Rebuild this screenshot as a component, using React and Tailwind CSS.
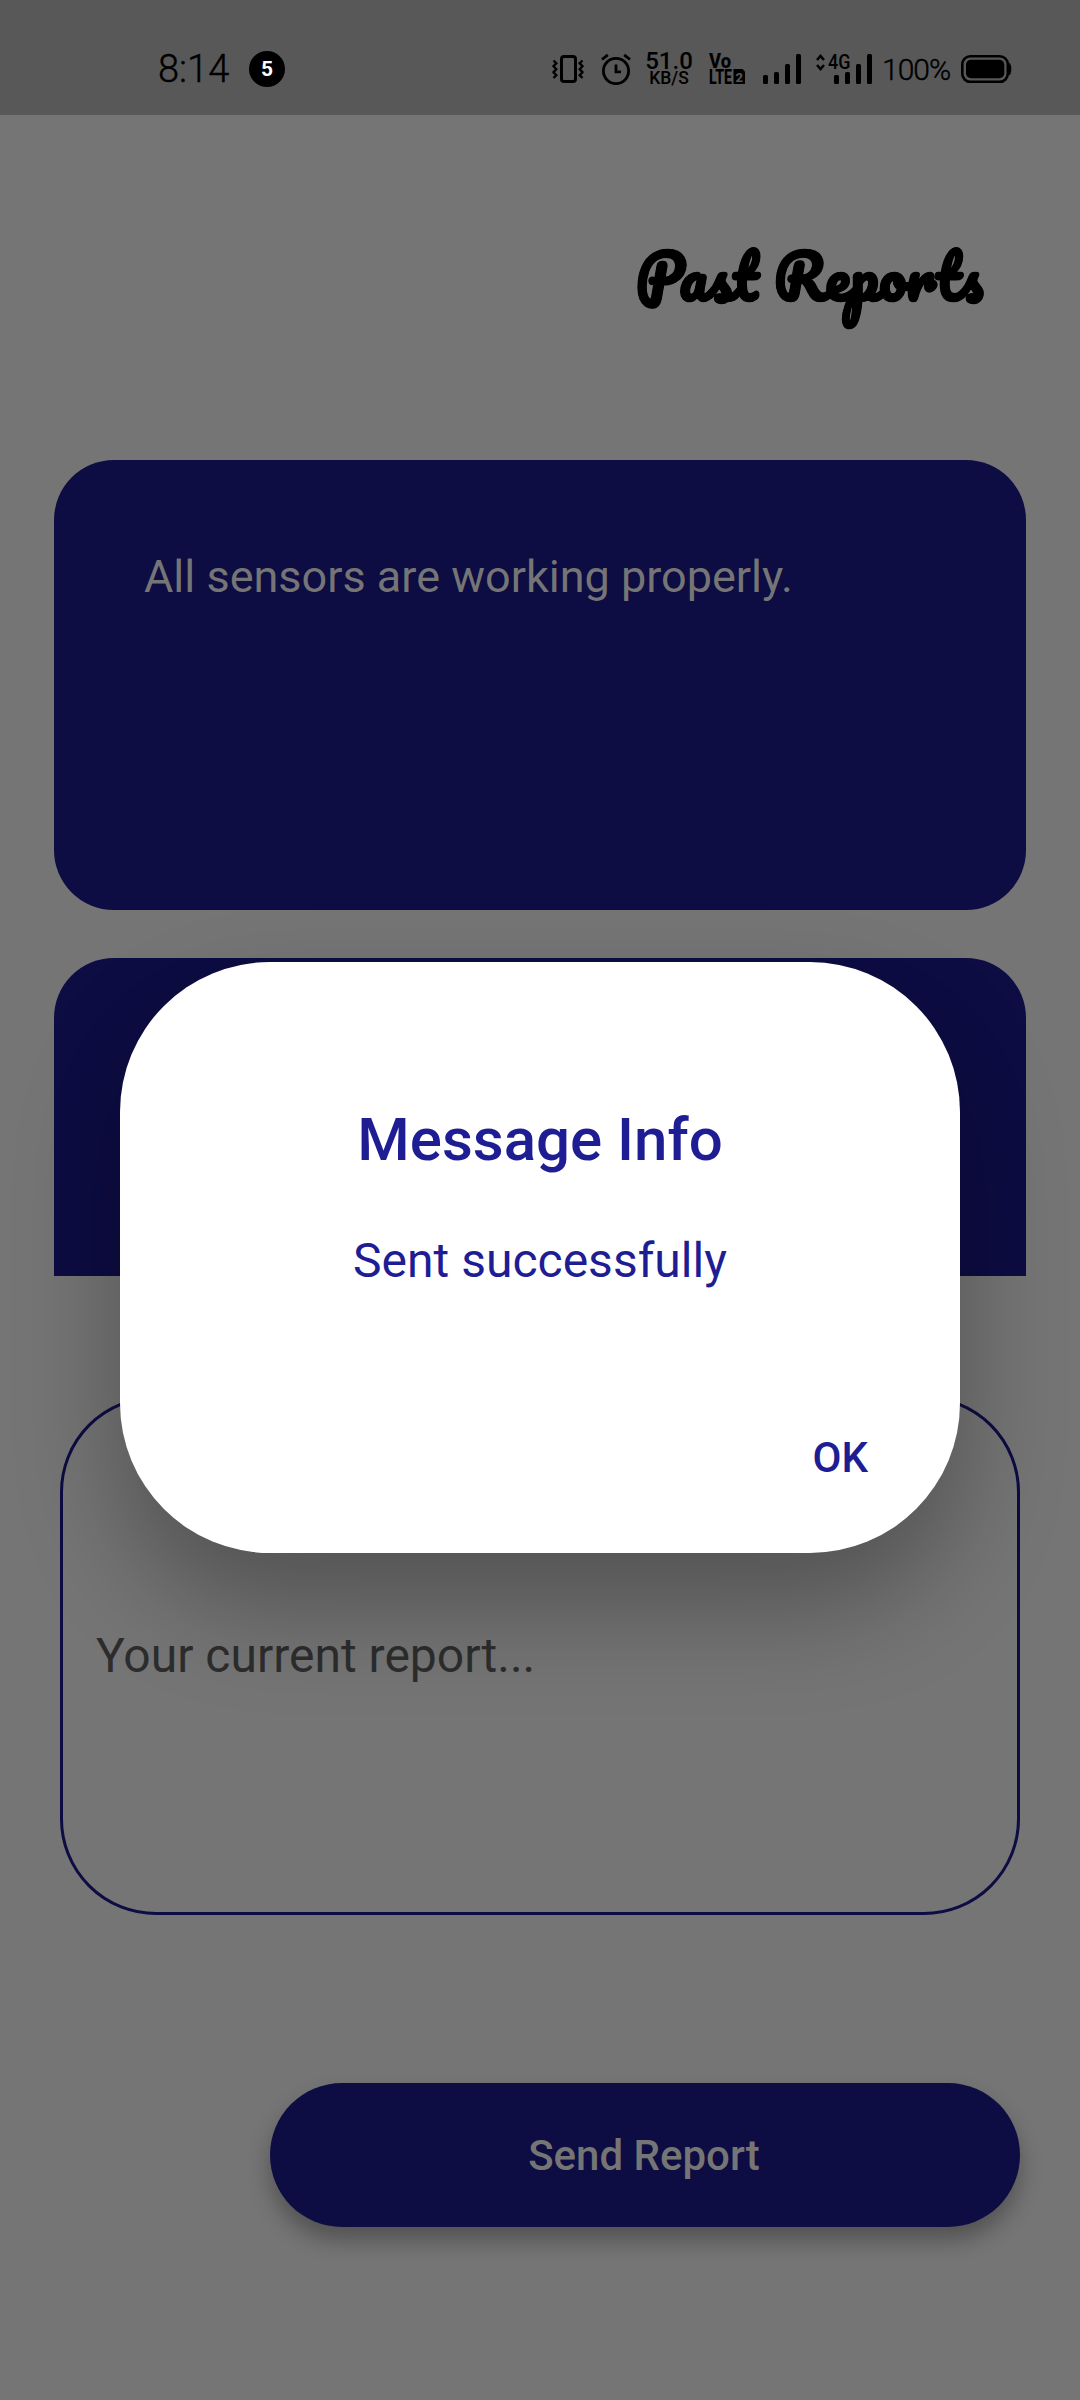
import React from "react";

function Vibrate() {
  return (
    <svg className="ml-[267px] h-9 w-8" viewBox="552 52 32 36" fill="none" stroke="#000">
      <rect x="561.5" y="56.5" width="14" height="25" rx="2.5" strokeWidth="3" />
      <path d="M553.5 60.5l2.8 2.7-2.8 3 2.8 3-2.8 3 2.8 3-2.8 2.8M582.5 60.5l-2.8 2.7 2.8 3-2.8 3 2.8 3-2.8 3 2.8 2.8" strokeWidth="2.4" />
    </svg>
  );
}

function Alarm() {
  return (
    <svg className="ml-[17px] h-9 w-[30px]" viewBox="601 52 30 36" fill="none" stroke="#000" strokeWidth="2.8">
      <circle cx="616" cy="71" r="12.6" />
      <path d="M616 64.500v7.300h5M602 59.500l5.800-4.600M630 59.500l-5.800-4.600" />
    </svg>
  );
}

function VoLte() {
  return (
    <svg className="ml-[15px] h-9 w-[38px] overflow-visible" viewBox="708 52 38 36" fontFamily="Roboto, sans-serif" fontWeight="800">
      <text x="709" y="68" fontSize="20" textLength="22" lengthAdjust="spacingAndGlyphs">Vo</text>
      <text x="709" y="84" fontSize="19.500" textLength="23" lengthAdjust="spacingAndGlyphs">LTE</text>
      <path d="M733.500 69h9l2.500 2.500v12.500h-11.500z" />
      <text x="735.500" y="81.500" fontSize="13.500" fill="#585858" textLength="7.500" lengthAdjust="spacingAndGlyphs">2</text>
    </svg>
  );
}

function Bars() {
  return (
    <g>
      <rect x="0" y="75" width="5" height="9" rx="1.500" />
      <rect x="11" y="72" width="5" height="12" rx="1.500" />
      <rect x="22" y="64" width="5" height="20" rx="1.500" />
      <rect x="33" y="54" width="5" height="30" rx="1.500" />
    </g>
  );
}

function Battery() {
  return (
    <svg className="ml-[10px] h-9 w-[51px]" viewBox="961 52 51 36">
      <rect x="962.300" y="56.300" width="45.500" height="25.500" rx="8" fill="none" stroke="#000" strokeWidth="2.600" />
      <rect x="966" y="59.700" width="38.300" height="18.600" rx="5" />
      <path d="M1009 62.500q2.300 1.500 2.300 6.500t-2.300 6.500z" />
    </svg>
  );
}

function StatusBar() {
  return (
    <header className="flex h-[115px] items-start bg-[#585858] pt-[52px] text-black">
      <span className="ml-[158px] w-[71px] text-[38px] font-light leading-[34px] whitespace-nowrap [-webkit-text-stroke:0.4px_black]">8:14</span>
      <span className="ml-[20px] -mt-px flex h-9 w-9 items-center justify-center rounded-full bg-black text-[21px] font-bold leading-none text-white">5</span>
      <Vibrate />
      <Alarm />
      <div className="ml-[14px] flex w-12 flex-col items-center font-medium whitespace-nowrap">
        <span className="text-[24px] leading-[18px]">51.0</span>
        <span className="text-[17.500px] leading-[17px]">KB/S</span>
      </div>
      <VoLte />
      <svg className="ml-[17px] h-9 w-[38px]" viewBox="0 52 38 36">
        <Bars />
      </svg>
      <svg className="ml-[15px] h-9 w-14 overflow-visible" viewBox="816 52 56 36">
        <path d="M817 60l3.500-4 3.500 4M817 65l3.500 4 3.500-4" fill="none" stroke="#000" strokeWidth="2.500" />
        <text x="828" y="68.500" fontSize="20.500" fontWeight="500" fontFamily="Roboto, sans-serif" textLength="22.500" lengthAdjust="spacingAndGlyphs">4G</text>
        <g transform="translate(834 0)">
          <Bars />
        </g>
      </svg>
      <span className="ml-[10px] w-[69px] text-[30px] font-light leading-[35px] tracking-[-1px] whitespace-nowrap [-webkit-text-stroke:0.4px_black]">100%</span>
      <Battery />
    </header>
  );
}

function Dialog() {
  return (
    <div className="absolute inset-x-[120px] top-[962px] flex h-[591px] flex-col items-center rounded-[150px] bg-white pt-[142px] text-[#1e1d94] shadow-[0_54px_104px_rgba(0,0,0,0.29)]">
      <h2 className="text-[60px] font-medium leading-[72px]">Message Info</h2>
      <p className="mt-[57px] text-[48px] leading-[56px]">Sent successfully</p>
      <button className="mr-[92px] mt-[144px] self-end text-[42px] font-medium leading-[50px]">OK</button>
    </div>
  );
}

export default function App() {
  return (
    <div className="relative flex h-[2400px] w-[1080px] flex-col overflow-hidden bg-[#757575] font-[Roboto,sans-serif]">
      <StatusBar />
      <h1 className="mt-[121px] mr-[97px] self-end font-[Pacifico,cursive] text-[60px] font-bold leading-[80px] text-black [-webkit-text-stroke:0.8px_black]">
        Past Reports
      </h1>
      <section className="mx-[54px] mt-36 h-[450px] rounded-[60px] bg-[#0d0c43] pt-[90px] pl-[90px] text-[45px] leading-[54px] text-[#757575]">
        All sensors are working properly.
      </section>
      <section className="mx-[54px] mt-12 h-[318px] rounded-t-[60px] bg-[#0d0c43]" />
      <div className="mx-[60px] mt-[120px] flex h-[519px] items-center rounded-[96px] border-[3px] border-[#0d0c43] pl-[33px] text-[48px] leading-[56px] text-[#2d2d2d]">
        Your current report...
      </div>
      <button className="mt-[168px] mr-[60px] h-36 w-[750px] self-end rounded-[72px] bg-[#0d0c43] pr-[2px] pt-px text-[42px] font-medium leading-[50px] text-[#757575] shadow-[0_13px_22px_rgba(0,0,0,0.3)]">
        Send Report
      </button>
      <Dialog />
    </div>
  );
}
